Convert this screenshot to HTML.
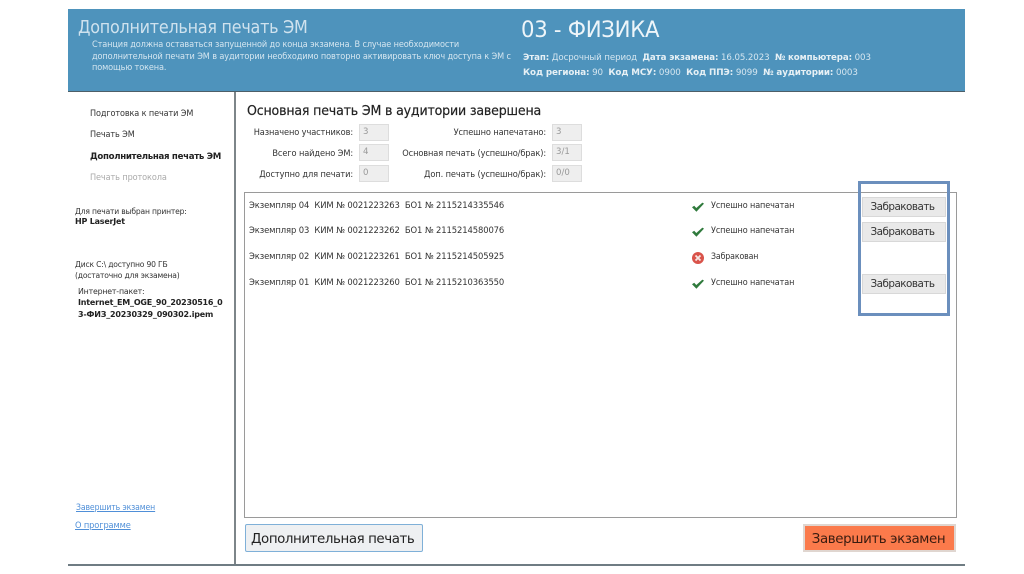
<!DOCTYPE html>
<html><head><meta charset="utf-8">
<style>
html,body{margin:0;padding:0;background:#fff;width:1024px;height:574px;overflow:hidden}
body{position:relative;font-family:"DejaVu Sans","Liberation Sans",sans-serif;color:#333}
.t{position:absolute;white-space:nowrap;line-height:12px;font-size:8.6px;letter-spacing:-.12px;filter:blur(.35px);transform-origin:0 0}
.r{text-align:right;transform-origin:100% 0}
.w{color:#d5e6f0}
.h{font-weight:bold;color:#e6f0f5}
.f{position:absolute;width:30px;height:17px;background:#eee;border:1px solid #ddd;box-sizing:border-box;font-size:8.6px;line-height:15px;color:#999;padding-left:3px;filter:blur(.25px)}
.z{position:absolute;left:862px;width:84px;height:20px;background:#e9e9e9;border:1px solid #d8d8d8;box-sizing:border-box;font-size:10.4px;line-height:19px;text-align:center;color:#333;filter:blur(.3px);letter-spacing:-.52px;padding-right:3px}
svg.i{position:absolute;filter:blur(.3px)}
a{color:#4f8fd8}
</style></head><body>
<div style="position:absolute;left:68px;top:9px;width:897px;height:83px;background:#4e93bc;border-bottom:1px solid #4d5f68;box-sizing:border-box"></div>
<div class="t" style="left:78px;top:17px;font-size:18px;line-height:22px;color:#cfe2ee;letter-spacing:-.28px;transform:scaleX(.888)">Дополнительная печать ЭМ</div>
<div class="t w" style="left:92px;top:40px;line-height:11.5px;letter-spacing:-.13px;transform:scaleX(.952)">Станция должна оставаться запущенной до конца экзамена. В случае необходимости<br>дополнительной печати ЭМ в аудитории необходимо повторно активировать ключ доступа к ЭМ с<br>помощью токена.</div>
<div class="t" style="left:521px;top:18px;font-size:22px;line-height:26px;color:#eef5f9;letter-spacing:-.3px;transform:scaleX(.965)">03 - ФИЗИКА</div>
<div class="t w" style="left:523px;top:52px;letter-spacing:-.1px;transform:scaleX(1.006)"><span class="h">Этап:</span> Досрочный период &nbsp;<span class="h">Дата экзамена:</span> 16.05.2023 &nbsp;<span class="h">№ компьютера:</span> 003</div>
<div class="t w" style="left:523px;top:67px;letter-spacing:-.1px;transform:scaleX(1.018)"><span class="h">Код региона:</span> 90 &nbsp;<span class="h">Код МСУ:</span> 0900 &nbsp;<span class="h">Код ППЭ:</span> 9099 &nbsp;<span class="h">№ аудитории:</span> 0003</div>

<div style="position:absolute;left:234px;top:92px;width:2px;height:473px;background:#7d8589"></div>
<div style="position:absolute;left:68px;top:564px;width:897px;height:2px;background:#6f7c83"></div>

<div class="t" style="left:90px;top:108px;transform:scaleX(.945)">Подготовка к печати ЭМ</div>
<div class="t" style="left:90px;top:129px;transform:scaleX(.945)">Печать ЭМ</div>
<div class="t" style="left:90px;top:151px;font-weight:bold;color:#222;letter-spacing:-.3px">Дополнительная печать ЭМ</div>
<div class="t" style="left:90px;top:172px;color:#aaa;transform:scaleX(.95)">Печать протокола</div>
<div class="t" style="left:75px;top:207px;font-size:8px;line-height:10px;letter-spacing:-.2px;transform:scaleX(.95)">Для печати выбран принтер:<br><b style="color:#222;display:inline-block;transform:scaleX(1.05);transform-origin:0 0">HP LaserJet</b></div>
<div class="t" style="left:75px;top:260px;font-size:8px;line-height:10.5px;letter-spacing:-.2px;transform:scaleX(.95)">Диск C:\ доступно 90 ГБ<br>(достаточно для экзамена)</div>
<div class="t" style="left:78px;top:286px;font-size:8px;line-height:11px;letter-spacing:-.2px;transform:scaleX(.98)">Интернет-пакет:<br><b style="color:#222;line-height:12px;display:inline-block;transform:scaleX(1.02);transform-origin:0 0">Internet_EM_OGE_90_20230516_0<br>3-ФИЗ_20230329_090302.ipem</b></div>
<div class="t" style="left:76px;top:502px;transform:scaleX(.9)"><a style="text-decoration:underline">Завершить экзамен</a></div>
<div class="t" style="left:75px;top:520px;transform:scaleX(.96)"><a style="text-decoration:underline">О программе</a></div>

<div class="t" style="left:247px;top:103px;font-size:13.4px;line-height:17px;color:#222;letter-spacing:-.18px;transform:scaleX(.94);-webkit-text-stroke:.2px #222">Основная печать ЭМ в аудитории завершена</div>
<div class="t r" style="left:234px;width:119px;top:127px;transform:scaleX(.96)">Назначено участников:</div>
<div class="t r" style="left:234px;width:119px;top:148px;transform:scaleX(.96)">Всего найдено ЭМ:</div>
<div class="t r" style="left:234px;width:119px;top:169px;transform:scaleX(.96)">Доступно для печати:</div>
<div class="f" style="left:359px;top:124px">3</div>
<div class="f" style="left:359px;top:144px">4</div>
<div class="f" style="left:359px;top:165px">0</div>
<div class="t r" style="left:380px;width:166px;top:127px;transform:scaleX(.96)">Успешно напечатано:</div>
<div class="t r" style="left:380px;width:166px;top:148px;transform:scaleX(.96)">Основная печать (успешно/брак):</div>
<div class="t r" style="left:380px;width:166px;top:169px;transform:scaleX(.96)">Доп. печать (успешно/брак):</div>
<div class="f" style="left:552px;top:124px">3</div>
<div class="f" style="left:552px;top:144px">3/1</div>
<div class="f" style="left:552px;top:165px">0/0</div>

<div style="position:absolute;left:244px;top:192px;width:713px;height:326px;border:1px solid #9a9a9a;box-sizing:border-box;background:#fff"></div>
<div class="t" style="left:249px;top:200px;transform:scaleX(.98)">Экземпляр 04 &nbsp;КИМ № 0021223263 &nbsp;БО1 № 2115214335546</div>
<div class="t" style="left:249px;top:225px;transform:scaleX(.98)">Экземпляр 03 &nbsp;КИМ № 0021223262 &nbsp;БО1 № 2115214580076</div>
<div class="t" style="left:249px;top:251px;transform:scaleX(.98)">Экземпляр 02 &nbsp;КИМ № 0021223261 &nbsp;БО1 № 2115214505925</div>
<div class="t" style="left:249px;top:277px;transform:scaleX(.98)">Экземпляр 01 &nbsp;КИМ № 0021223260 &nbsp;БО1 № 2115210363550</div>

<svg class="i" style="left:691px;top:201px" width="14" height="12" viewBox="0 0 14 12"><path d="M1 6.2 3.2 4.8 5.3 7 11.4 1.6 13 2.6 5.4 10.8Z" fill="#2f7a3c"/></svg>
<svg class="i" style="left:691px;top:226px" width="14" height="12" viewBox="0 0 14 12"><path d="M1 6.2 3.2 4.8 5.3 7 11.4 1.6 13 2.6 5.4 10.8Z" fill="#2f7a3c"/></svg>
<svg class="i" style="left:691px;top:278px" width="14" height="12" viewBox="0 0 14 12"><path d="M1 6.2 3.2 4.8 5.3 7 11.4 1.6 13 2.6 5.4 10.8Z" fill="#2f7a3c"/></svg>
<svg class="i" style="left:691px;top:251px" width="14" height="14" viewBox="0 0 14 14"><circle cx="7" cy="7" r="6" fill="#d9534a"/><path d="M4.5 4.5 9.5 9.5M9.5 4.5 4.5 9.5" stroke="#f6e6e4" stroke-width="1.8"/></svg>
<div class="t" style="left:711px;top:200px;transform:scaleX(.943)">Успешно напечатан</div>
<div class="t" style="left:711px;top:225px;transform:scaleX(.943)">Успешно напечатан</div>
<div class="t" style="left:711px;top:251px;transform:scaleX(.91)">Забракован</div>
<div class="t" style="left:711px;top:277px;transform:scaleX(.943)">Успешно напечатан</div>

<div class="z" style="top:197px">Забраковать</div>
<div class="z" style="top:222px">Забраковать</div>
<div class="z" style="top:274px">Забраковать</div>
<div style="position:absolute;left:858px;top:181px;width:92px;height:135px;border:3px solid #6b8fbd;box-sizing:border-box"></div>

<div style="position:absolute;left:245px;top:524px;width:178px;height:28px;background:#eef0f2;border:1px solid #7fb0d8;border-radius:2px;box-sizing:border-box;font-size:13.4px;line-height:29px;padding-left:5px;color:#222;white-space:nowrap;letter-spacing:-.42px;filter:blur(.25px)">Дополнительная печать</div>
<div style="position:absolute;left:803px;top:524px;width:153px;height:28px;background:#fb7a4b;border:2px solid #e0d6d0;box-sizing:border-box;font-size:13.4px;line-height:27px;text-align:center;color:#3a1c10;white-space:nowrap;letter-spacing:-.4px;padding-right:2px;filter:blur(.25px)">Завершить экзамен</div>
</body></html>
